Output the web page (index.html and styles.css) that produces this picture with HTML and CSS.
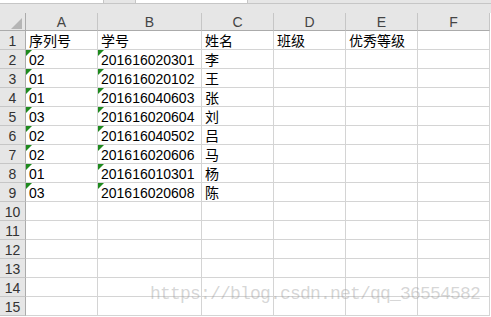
FILE: index.html
```html
<!DOCTYPE html>
<html lang="zh-CN">
<head>
  <meta charset="UTF-8">
  <title>Sheet1</title>
  <link rel="stylesheet" href="styles.css">
</head>
<body>
  <div id="sheet">
    <!-- 名称框和编辑栏的下边缘 -->
    <div class="topbar">
      <div class="namebox"></div>
      <div class="formula"></div>
    </div>
    <div class="band"></div>
    <div class="grid">
      <div class="corner"><span class="tri"></span></div>
      <div class="colhead">A</div>
      <div class="colhead">B</div>
      <div class="colhead">C</div>
      <div class="colhead">D</div>
      <div class="colhead">E</div>
      <div class="colhead">F</div>

      <div class="rowhead">1</div>
      <div class="cell">序列号</div><div class="cell">学号</div><div class="cell">姓名</div><div class="cell">班级</div><div class="cell">优秀等级</div><div class="cell"></div>

      <div class="rowhead">2</div>
      <div class="cell txt">02</div><div class="cell txt">201616020301</div><div class="cell">李</div><div class="cell"></div><div class="cell"></div><div class="cell"></div>

      <div class="rowhead">3</div>
      <div class="cell txt">01</div><div class="cell txt">201616020102</div><div class="cell">王</div><div class="cell"></div><div class="cell"></div><div class="cell"></div>

      <div class="rowhead">4</div>
      <div class="cell txt">01</div><div class="cell txt">201616040603</div><div class="cell">张</div><div class="cell"></div><div class="cell"></div><div class="cell"></div>

      <div class="rowhead">5</div>
      <div class="cell txt">03</div><div class="cell txt">201616020604</div><div class="cell">刘</div><div class="cell"></div><div class="cell"></div><div class="cell"></div>

      <div class="rowhead">6</div>
      <div class="cell txt">02</div><div class="cell txt">201616040502</div><div class="cell">吕</div><div class="cell"></div><div class="cell"></div><div class="cell"></div>

      <div class="rowhead">7</div>
      <div class="cell txt">02</div><div class="cell txt">201616020606</div><div class="cell">马</div><div class="cell"></div><div class="cell"></div><div class="cell"></div>

      <div class="rowhead">8</div>
      <div class="cell txt">01</div><div class="cell txt">201616010301</div><div class="cell">杨</div><div class="cell"></div><div class="cell"></div><div class="cell"></div>

      <div class="rowhead">9</div>
      <div class="cell txt">03</div><div class="cell txt">201616020608</div><div class="cell">陈</div><div class="cell"></div><div class="cell"></div><div class="cell"></div>

      <div class="rowhead">10</div>
      <div class="cell"></div><div class="cell"></div><div class="cell"></div><div class="cell"></div><div class="cell"></div><div class="cell"></div>

      <div class="rowhead">11</div>
      <div class="cell"></div><div class="cell"></div><div class="cell"></div><div class="cell"></div><div class="cell"></div><div class="cell"></div>

      <div class="rowhead">12</div>
      <div class="cell"></div><div class="cell"></div><div class="cell"></div><div class="cell"></div><div class="cell"></div><div class="cell"></div>

      <div class="rowhead">13</div>
      <div class="cell"></div><div class="cell"></div><div class="cell"></div><div class="cell"></div><div class="cell"></div><div class="cell"></div>

      <div class="rowhead">14</div>
      <div class="cell"></div><div class="cell"></div><div class="cell"></div><div class="cell"></div><div class="cell"></div><div class="cell"></div>

      <div class="rowhead">15</div>
      <div class="cell"></div><div class="cell"></div><div class="cell"></div><div class="cell"></div><div class="cell"></div><div class="cell"></div>
    </div>
    <!-- 水印 -->
    <div class="watermark">https://blog.csdn.net/qq_36554582</div>
  </div>
</body>
</html>
```

FILE: styles.css
```css
body {
  margin: 0;
  padding: 0;
  background: #fff;
  font-family: "Liberation Sans", "Noto Sans CJK SC", sans-serif;
  font-size: 14px;
  color: #000;
}
#sheet {
  position: relative;
  width: 491px;
  height: 317px;
  overflow: hidden;
}
.topbar {
  display: flex;
  height: 3px;
  background: #e6e6e6;
  border-bottom: 1px solid #c6c6c6;
}
.namebox {
  width: 103px;
  background: #fff;
  border-right: 1px solid #c6c6c6;
}
.formula {
  width: 111px;
  margin-left: 31px;
  background: #fff;
  border-left: 1px solid #c6c6c6;
  border-right: 1px solid #c6c6c6;
}
.band {
  height: 9px;
  background: #e6e6e6;
}
.grid {
  display: grid;
  grid-template-columns: 26px 72px 104px 72px 72px 72px 72px;
  grid-template-rows: 18px repeat(15, 19px);
}
.corner {
  position: relative;
  background: #e6e6e6;
  border-right: 1px solid #ababab;
  border-bottom: 1px solid #ababab;
}
.tri {
  position: absolute;
  right: 3px;
  bottom: 1px;
  width: 0;
  height: 0;
  border-left: 11px solid transparent;
  border-bottom: 11px solid #b5b5b5;
}
.colhead {
  background: #e6e6e6;
  border-right: 1px solid #c6c6c6;
  border-bottom: 1px solid #ababab;
  color: #444;
  display: flex;
  align-items: flex-end;
  justify-content: center;
  line-height: 16px;
}
.rowhead {
  background: #e6e6e6;
  border-right: 1px solid #ababab;
  border-bottom: 1px solid #c6c6c6;
  color: #333;
  display: flex;
  align-items: flex-end;
  justify-content: center;
  line-height: 16px;
}
.cell {
  position: relative;
  border-right: 1px solid #d4d4d4;
  border-bottom: 1px solid #d4d4d4;
  display: flex;
  align-items: flex-end;
  padding-left: 3px;
  line-height: 16px;
  white-space: nowrap;
}
.txt::before {
  content: "";
  position: absolute;
  left: 0;
  top: 0;
  width: 0;
  height: 0;
  border-top: 6px solid #1e8a1e;
  border-right: 6px solid transparent;
}
.watermark {
  position: absolute;
  left: 150px;
  top: 284px;
  font-family: "Liberation Mono", monospace;
  font-size: 18px;
  letter-spacing: -0.8px;
  color: rgba(150, 150, 150, 0.4);
  white-space: nowrap;
}
```
